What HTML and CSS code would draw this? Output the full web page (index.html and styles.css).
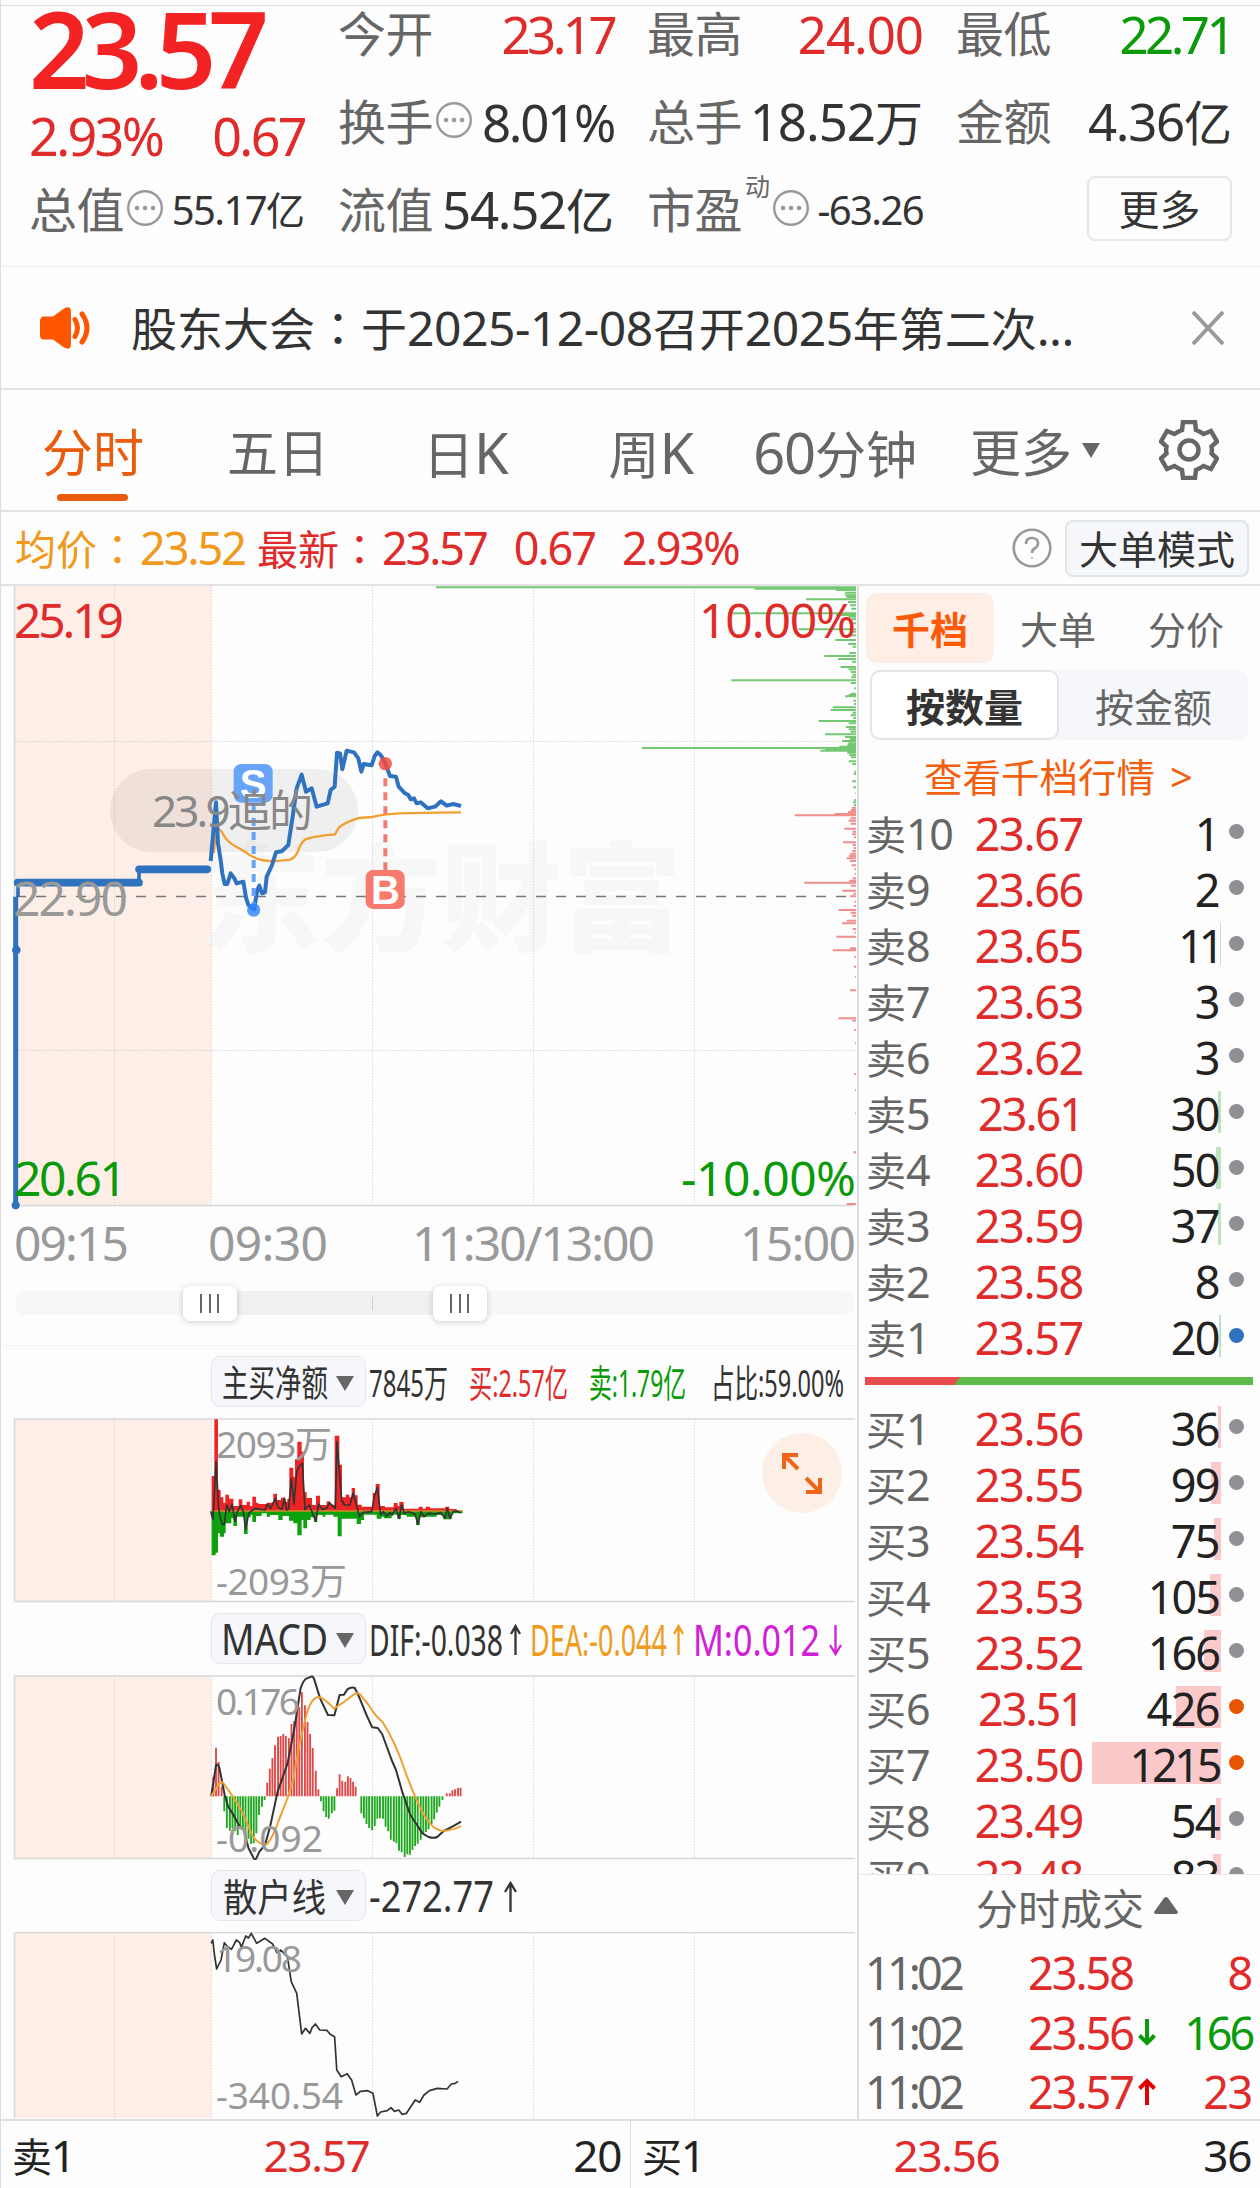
FILE: index.html
```html
<!DOCTYPE html>
<html lang="zh-CN">
<head>
<meta charset="utf-8">
<title>分时行情</title>
<link rel="stylesheet" href="styles.css">
</head>
<body>
<div class="page">

<header class="quote">
  <div class="col">
    <div class="big">23.57</div>
    <div class="change"><span>2.93%</span><span>0.67</span></div>
    <div class="cell"><span class="key">总值</span><svg class="dots" viewBox="0 0 36 36"><circle cx="18" cy="18" r="16.8"/><path d="M10 18h.1M18 18h.1M26 18h.1"/></svg><span class="val mid n1">55.17<small>亿</small></span></div>
  </div>
  <div class="col">
    <div class="cell"><span class="key">今开</span><span class="val red n1">23.17</span></div>
    <div class="cell"><span class="key">换手</span><svg class="dots" viewBox="0 0 36 36"><circle cx="18" cy="18" r="16.8"/><path d="M10 18h.1M18 18h.1M26 18h.1"/></svg><span class="val n2">8.01%</span></div>
    <div class="cell"><span class="key">流值</span><span class="val">54.52<small>亿</small></span></div>
  </div>
  <div class="col">
    <div class="cell"><span class="key">最高</span><span class="val red n0">24.00</span></div>
    <div class="cell"><span class="key">总手</span><span class="val n2">18.52<small>万</small></span></div>
    <div class="cell"><span class="key">市盈</span><sup>动</sup><svg class="dots" viewBox="0 0 36 36"><circle cx="18" cy="18" r="16.8"/><path d="M10 18h.1M18 18h.1M26 18h.1"/></svg><span class="val mid">-63.26</span></div>
  </div>
  <div class="col">
    <div class="cell"><span class="key">最低</span><span class="val green n1">22.71</span></div>
    <div class="cell"><span class="key">金额</span><span class="val">4.36<small>亿</small></span></div>
    <div class="cell"><button class="more">更多</button></div>
  </div>
</header>

<section class="notice">
  <svg class="horn" viewBox="0 0 54 46"><path d="M5 11.500H14L25 3.500Q32 0 32 7V39Q32 46 25 42.500L14 34.500H5Q1 34.500 1 30V16Q1 11.500 5 11.500Z" fill="#ff5500"/><path d="M36 14.500Q41 23 36 31.500M43 9Q53 23 43 37" fill="none" stroke="#ff5500" stroke-width="5" stroke-linecap="round"/></svg>
  <p>股东大会<span class="tc" lang="zh-TW">：</span>于<b>2025-12-08</b>召开<b>2025</b>年第二次<b>...</b></p>
  <svg class="close" viewBox="0 0 34 34"><path d="M2 1L32 33M32 1L2 33"/></svg>
</section>

<nav class="tabs">
  <a class="on">分时</a><a>五日</a><a>日<b>K</b></a><a>周<b>K</b></a><a><b>60</b>分钟</a><a>更多</a>
  <svg class="caret" viewBox="0 0 18 15"><path d="M0 0H18L9 15Z"/></svg>
  <svg class="gear" viewBox="0 0 60 60"><path d="M24 2H36L37 10Q41 11.500 44.500 14L52 11L58 21.500L52.500 26.500Q53.300 30 52.500 33.500L58 38.500L52 49L44.500 46Q41 48.500 37 50L36 58H24L23 50Q19 48.500 15.500 46L8 49L2 38.500L7.500 33.500Q6.700 30 7.500 26.500L2 21.500L8 11L15.500 14Q19 11.500 23 10Z"/><circle cx="30" cy="30" r="9.500"/></svg>
</nav>

<section class="info">
  <span class="avg">均价<span class="tc" lang="zh-TW">：</span><b>23.52</b></span>
  <span class="last">最新<span class="tc" lang="zh-TW">：</span><b>23.57</b><b class="g">0.67</b><b class="g">2.93%</b></span>
  <svg class="help" viewBox="0 0 40 40"><circle cx="20" cy="20" r="18.300"/><path d="M14 16Q14 10 20 10T26 15.500Q26 18.500 22.500 20.500Q20 22 20 25M20 29.500V30.500"/></svg>
  <button>大单模式</button>
</section>

<main>
<div class="charts">
  <svg class="intraday" viewBox="0 586 857 694">
    <rect x="14" y="586" width="197" height="619" fill="#fdeee7"/>
    <text class="mark" x="200" y="942" textLength="482" lengthAdjust="spacingAndGlyphs">东方财富</text>
    <path class="grid" d="M114.500 587V1205M211.500 587V1205M372.500 587V1205M533.500 587V1205M694.500 587V1205M14 741.500H855M14 1050.500H855"/>
    <path class="frame" d="M14.500 586V1205M14 1205.500H855"/>
    <g transform="translate(420 580) scale(.33333)">
      <path class="depth g" d="M48 22H1308M1003 26H1308M1248 30H1308M1275 38H1308M1275 46H1308M1158 58H1308M1280 51H1308M1284 66H1308M1290 76H1308M1294 86H1308M925 100H1308M1248 105H1308M1285 110H1308M1294 118H1308M1288 130H1308M1135 148H1308M1293 155H1308M1280 166H1308M1246 180H1308M1285 192H1308M1298 200H1308M1288 219H1308M1213 228H1308M1254 237H1308M1296 245H1308M1262 261H1308M1286 268H1308M1292 276H1308M1297 284H1308M1294 292H1308M934 301H1308M1292 309H1308M1303 325H1308M1292 341H1308M1286 345H1308M1275 349H1308M1300 362H1308M1302 372H1308M1238 382H1308M1232 390H1308M1298 398H1308M1292 406H1308M1300 414H1308M1196 423H1308M1286 430H1308M1278 441H1308M1286 448H1308M1292 455H1308M1215 463H1308M1275 471H1308M1290 477H1308M1266 483H1308M1285 490H1308M1282 496H1308M1258 500H1308M666 504H1308M1215 508H1308M1201 512H1308M1282 518H1308M1288 525H1308M1293 532H1308M1286 544H1308M1297 552H1308M1303 575H1308M1301 582H1308M1297 604H1308M1300 622H1308M1306 640H1308M1303 660H1308M1299 667H1308M1302 675H1308"/>
      <path class="depth r" d="M1296 683H1308M1292 690H1308M1284 696H1308M1244 702H1308M1124 706H1308M1291 715H1308M1286 722H1308M1292 731H1308M1273 746H1308M1298 755H1308M1296 763H1308M1302 772H1308M1269 787H1308M1298 795H1308M1301 804H1308M1297 813H1308M1291 821H1308M1287 828H1308M1280 835H1308M1290 843H1308M1295 856H1308M1303 868H1308M1305 882H1308M1298 895H1308M1288 902H1308M1153 908H1308M1292 917H1308M1267 932H1308M1300 941H1308M1290 949H1308M1304 965H1308M1302 978H1308M1256 990H1308M1292 998H1308M1297 1007H1308M1280 1022H1308M1266 1030H1308M1298 1047H1308M1304 1058H1308M1249 1070H1308M1290 1105H1308M1238 1111H1308M1303 1130H1308M1302 1160H1308M1305 1190H1308M1290 1231H1308M1255 1315H1308M1297 1322H1308M1303 1350H1308M1305 1390H1308M1303 1482H1308M1305 1530H1308M1306 1600H1308M1300 1717H1308M1280 1872H1308"/>
    </g>
    <rect x="110" y="769" width="248" height="83" rx="41" fill="#000" opacity=".055"/>
    <path d="M16 896.500H855" stroke="#777" stroke-width="1.500" stroke-dasharray="10 10"/>
    <g transform="translate(0 580) scale(.33333)">
      <path d="M47 1873V950" fill="none" stroke="#2f72bf" stroke-width="15"/>
      <circle cx="49" cy="1110" r="13" fill="#2f72bf"/><circle cx="47" cy="1876" r="12" fill="#2f72bf"/>
      <path d="M53 908H417M417 868H622" fill="none" stroke="#2f72bf" stroke-width="23" stroke-linecap="round"/>
      <path d="M54 950V908M417 868V908" fill="none" stroke="#2f72bf" stroke-width="11"/>
      <path d="M641 820L650 740L665 755Q680 785 705 798L735 815Q755 833 785 840T870 839Q885 833 893 815Q904 785 915 779Q935 769 1005 763L1017 742Q1045 723 1078 714L1118 711Q1150 702 1200 700T1383 697" fill="none" stroke="#f0a030" stroke-width="7"/>
      <path d="M632 843L648 667L654 790L662 840L667 880L674 912L682 912L692 880L703 895L710 910L730 905L738 953L745 975L762 988L772 930L778 917L786 940L795 937L800 890L815 858L828 817L845 814L865 795L878 710L890 625L905 584L918 635L935 625L950 680L983 670L992 630L1004 620L1011 518L1020 520L1027 568L1040 512L1062 517L1075 535L1084 575L1091 552L1115 556L1124 528L1132 517L1142 525L1156 550L1170 588L1188 590L1196 620L1215 640L1225 645L1232 658L1242 655L1250 670L1262 667L1283 685L1305 680L1323 664L1340 677L1360 672L1383 678" fill="none" stroke="#2f72bf" stroke-width="12" stroke-linejoin="round"/>
      <path d="M761 672V980" stroke="#67a4f5" stroke-width="12" stroke-dasharray="24 18"/>
      <path d="M1156 595V870" stroke="#ee7d74" stroke-width="12" stroke-dasharray="24 18"/>
      <circle cx="761" cy="990" r="20" fill="#2c82fa" opacity=".8"/><circle cx="1156" cy="551" r="20" fill="#f34b3f" opacity=".85"/>
      <rect x="701" y="552" width="117" height="116" rx="22" fill="#67a4f7"/><rect x="1097" y="870" width="117" height="117" rx="22" fill="#f87a6e"/>
      <text class="badge" x="759" y="654">S</text><text class="badge" x="1156" y="971">B</text>
    </g>
    <g class="axis">
      <text x="152" y="827" textLength="161" class="pill">23.9追的</text>
      <text x="14" y="637.500" textLength="110" fill="#e02b2b">25.19</text>
      <text x="699" y="637.500" textLength="157" fill="#e02b2b">10.00%</text>
      <text x="13" y="916" textLength="115" fill="#999">22.90</text>
      <text x="14" y="1195.500" textLength="113" fill="#0a9a0a">20.61</text>
      <text x="681" y="1195.500" textLength="175" fill="#0a9a0a">-10.00%</text>
      <text x="14" y="1260.500" textLength="115">09:15</text>
      <text x="208" y="1260.500" textLength="120">09:30</text>
      <text x="412" y="1260.500" textLength="243">11:30/13:00</text>
      <text x="740" y="1260.500" textLength="116">15:00</text>
    </g>
  </svg>
  <div class="slider"><div class="track"><i class="sel"></i><i class="tick"></i><i class="knob a"></i><i class="knob b"></i></div></div>

  <section class="panel">
    <div class="head"><button><svg viewBox="0 0 152 50"><text x="10" y="39.500" textLength="106" lengthAdjust="spacingAndGlyphs" font-size="37">主买净额</text><path d="M124 19H142L133 34Z" fill="#666"/></svg></button>
      <svg class="legend" viewBox="366 0 490 50" font-size="38"><text x="369" y="41" textLength="79" lengthAdjust="spacingAndGlyphs">7845万</text><text class="up" x="469" y="41" textLength="99" lengthAdjust="spacingAndGlyphs">买:2.57亿</text><text class="down" x="589" y="41" textLength="97" lengthAdjust="spacingAndGlyphs">卖:1.79亿</text><text x="711" y="41" textLength="133" lengthAdjust="spacingAndGlyphs">占比:59.00%</text></svg></div>
    <svg class="plot" viewBox="0 1418 857 185">
      <rect x="14" y="1419" width="197" height="183" fill="#fdeee7"/>
      <path class="grid" d="M114.500 1419V1602M211.500 1419V1602M372.500 1419V1602M533.500 1419V1602M694.500 1419V1602"/>
      <path class="frame" d="M14.500 1419V1602M14 1419H855M14 1601.500H855"/>
      <g transform="translate(190 1400) scale(.33333)">
        <path fill="#ee2424" d="M65 332V228H73V58H84V270H92V292H100V308H106V284H117V296H130V318H146V298H157V315H170V305H180V318H187V290H198V308H205V312H230V308H250V281H261V300H273V293H286V305H292V297H298V203H310V230H315V178H322V125H335V155H342V277H350V294H366V315H378V287H390V315H410V304H420V314H434V107H448V194H456V292H467V284H478V292H485V264H495V286H503V314H515V320H548V279H557V252H569V318H585V322H611V309H623V318H628V306H641V326H686V320H698V326H707V320H720V325H765V320H778V327H800V332Z"/>
        <path fill="#0da10d" d="M65 334V466H77V458H84V400H90V410H102V400H107V370H124V355H130V378H141V350H162V402H173V352H182V345H187V366H198V348H215V340H230V350H240V345H265V360H278V348H297V362H310V370H322V406H335V360H340V385H351V360H362V352H372V366H382V345H398V350H406V344H430V350H443V409H455V356H500V372H513V360H522V344H560V356H575V350H582V355H605V344H622V356H633V345H650V350H678V375H689V352H705V350H740V345H760V358H785V340H818V334Z"/>
        <path stroke="#c08018" stroke-width="4" d="M65 333H818"/>
        <path class="ink" stroke-width="5" d="M62 334L69 358L78 184L86 325L92 358L97 373H103L110 315L118 335L126 312L135 363L142 335L152 317L160 335L167 388L176 340L186 332L195 325L225 330L232 312L242 325L256 295L264 322L276 328L283 295L290 330L296 325L304 235L312 312L320 215L328 198L337 190L345 328L358 315L368 340L377 364L386 312L396 328L410 325L418 308L430 320L436 325L441 125L447 200L455 300L463 315H480L489 280L497 305L508 350L518 338L545 335L553 290L562 262L572 345L580 335L590 348L600 338L606 345L618 325L627 355L635 315L643 340L655 335L675 342L684 373L693 335L702 350L715 340L735 342L752 338L765 355L772 325L780 355L790 335L800 333L812 338"/>
      </g>
      <g class="axis small"><text x="216" y="1457.500" textLength="116">2093万</text><text x="216" y="1594.500" textLength="131">-2093万</text></g>
      <circle cx="802" cy="1473" r="40" fill="#fdeee6"/>
      <path d="M784 1469V1455H798M784 1455L798 1469M820 1478V1492H806M820 1492L806 1478" fill="none" stroke="#f06418" stroke-width="4"/>
    </svg>
  </section>

  <section class="panel">
    <div class="head"><button><svg viewBox="0 0 152 50"><text x="9" y="41" textLength="107" lengthAdjust="spacingAndGlyphs" font-size="43">MACD</text><path d="M124 19H142L133 34Z" fill="#666"/></svg></button>
      <svg class="legend" viewBox="366 0 490 50" font-size="44"><text x="369" y="42.500" textLength="134" lengthAdjust="spacingAndGlyphs">DIF:-0.038</text><path class="arr" stroke="#333" d="M515.500 42V14M511 21L515.500 13L520 21"/><text class="dea" x="530" y="42.500" textLength="137" lengthAdjust="spacingAndGlyphs">DEA:-0.044</text><path class="arr" stroke="#ee9c20" d="M678.500 42V14M674 21L678.500 13L683 21"/><text class="m" x="693" y="42.500" textLength="127" lengthAdjust="spacingAndGlyphs">M:0.012</text><path class="arr" stroke="#d020d8" d="M835.500 12V40M830 32L835.500 41L841 32"/></svg></div>
    <svg class="plot" viewBox="0 1675 857 185">
      <rect x="14" y="1676" width="197" height="183" fill="#fdeee7"/>
      <path class="grid" d="M114.500 1676V1859M211.500 1676V1859M372.500 1676V1859M533.500 1676V1859M694.500 1676V1859"/>
      <path class="frame" d="M14.500 1676V1859M14 1676H855M14 1858.500H855"/>
      <g transform="translate(190 1600) scale(.4337 .33333)">
        <path class="bar" stroke="#e04848" d="M54 589V530M60 589V443M66 589V486M73 589V560M178 589V548M184 589V506M190 589V474M196 589V436M203 589V410M209 589V408M215 589V402M221 589V408M228 589V415M234 589V372M240 589V364M246 589V340M252 589V322M258 589V276M265 589V316M271 589V366M277 589V402M283 589V444M290 589V512M296 589V568M339 589V565M345 589V523M351 589V542M358 589V545M364 589V529M370 589V534M376 589V545M382 589V560M592 589V580M599 589V580M605 589V571M611 589V568M618 589V564M624 589V563"/>
        <path class="bar" stroke="#1da81d" d="M79 589V634M85 589V684M92 589V692M98 589V685M104 589V692M110 589V705M116 589V688M122 589V690M128 589V700M135 589V716M141 589V732M147 589V730M153 589V700M159 589V645M166 589V620M172 589V600M302 589V604M308 589V634M314 589V651M320 589V656M327 589V640M333 589V632M395 589V640M401 589V655M407 589V672M413 589V684M420 589V691M426 589V678M432 589V656M438 589V655M445 589V656M451 589V680M457 589V694M463 589V719M470 589V725M476 589V730M482 589V752M488 589V757M495 589V771M501 589V763M507 589V764M513 589V750M519 589V738M525 589V731M532 589V719M538 589V701M544 589V696M550 589V688M557 589V672M563 589V658M569 589V638M575 589V620M582 589V600"/>
        <path class="ink" vector-effect="non-scaling-stroke" stroke-width="2" d="M49 588L60 495Q65 490 68 505L80 585L88 620L98 640L115 680L124 690L135 745L147 775Q151 782 154 772L160 755L173 735L185 678L202 575L225 490L240 390L255 265Q262 240 268 236L280 230Q285 228 288 245L300 295L318 345L333 346L345 285L355 284L363 268Q372 260 380 264L388 285L396 310L407 345L420 382L433 384L443 402L465 480L475 510L490 578L508 645L522 672L536 700L550 711Q562 716 570 711L585 693L605 680L625 665"/>
        <path vector-effect="non-scaling-stroke" fill="none" stroke="#f0a030" stroke-width="2" d="M49 588L68 550Q73 540 80 555L97 586L120 635L145 710Q165 740 178 732Q192 710 205 660Q225 600 238 540Q250 440 263 375Q275 295 295 291Q307 290 332 326L355 306L378 283Q385 277 392 283L410 312L428 346L445 368Q475 430 495 510Q520 600 540 645Q560 690 580 692Q605 693 625 678"/>
      </g>
      <g class="axis small"><text x="216" y="1715" textLength="84">0.176</text><text x="216" y="1852" textLength="107">-0.092</text></g>
    </svg>
  </section>

  <section class="panel">
    <div class="head"><button><svg viewBox="0 0 152 50"><text x="11" y="40" textLength="103" lengthAdjust="spacingAndGlyphs" font-size="38">散户线</text><path d="M124 19H142L133 34Z" fill="#666"/></svg></button>
      <svg class="legend" viewBox="366 0 490 50" font-size="44"><text x="369" y="42" textLength="125" lengthAdjust="spacingAndGlyphs">-272.77</text><path class="arr" stroke="#333" d="M510.500 42V14M505 22L510.500 13L516 22"/></svg></div>
    <svg class="plot" viewBox="0 1932 857 187">
      <rect x="14" y="1933" width="197" height="185" fill="#fdeee7"/>
      <path class="grid" d="M114.500 1933V2119M211.500 1933V2119M372.500 1933V2119M533.500 1933V2119M694.500 1933V2119"/>
      <path class="frame" d="M14.500 1933V2118M14 1932.500H855"/>
      <g transform="translate(0 1860) scale(.5485 .33333)"><path class="ink" vector-effect="non-scaling-stroke" stroke-width="1.700" d="M385 250L388 240L391 285L395 327L403 300L409 248L415 260L422 268L431 240L437 248L440 262L448 228L453 234L458 220L468 250L483 235L497 252L505 278L512 270L520 285L524 290L531 365L541 400L550 522L557 505L565 520L569 503L575 492L583 510L596 511L602 523L610 530L614 630L622 650L633 641L641 660L649 705L657 694L670 692L680 700L688 768L694 756L706 752L713 743L719 754L727 750L733 763L741 760L757 720L765 727L773 705L783 692L797 685L815 687L823 672L830 670L835 664"/></g>
      <g class="axis small"><text x="216" y="1971.500" textLength="86">19.08</text><text x="216" y="2108.500" textLength="127">-340.54</text></g>
    </svg>
  </section>
</div>

<aside class="book">
  <div class="modes"><a class="on">千档</a><a>大单</a><a>分价</a></div>
  <div class="seg"><a class="on">按数量</a><a>按金额</a></div>
  <a class="link">查看千档行情<b>&gt;</b></a>
  <div class="levels">
    <ul class="sell">
      <li><span>卖<b>10</b></span><em>23.67</em><q>1</q><i></i></li>
      <li><span>卖<b>9</b></span><em>23.66</em><q>2</q><i></i></li>
      <li><span>卖<b>8</b></span><em>23.65</em><q class="n2"><u style="width:1px"></u>11</q><i></i></li>
      <li><span>卖<b>7</b></span><em>23.63</em><q>3</q><i></i></li>
      <li><span>卖<b>6</b></span><em>23.62</em><q>3</q><i></i></li>
      <li><span>卖<b>5</b></span><em class="n1">23.61</em><q><u style="width:3px"></u>30</q><i></i></li>
      <li><span>卖<b>4</b></span><em>23.60</em><q><u style="width:5px"></u>50</q><i></i></li>
      <li><span>卖<b>3</b></span><em>23.59</em><q><u style="width:3px"></u>37</q><i></i></li>
      <li><span>卖<b>2</b></span><em>23.58</em><q>8</q><i></i></li>
      <li><span>卖<b>1</b></span><em>23.57</em><q><u style="width:2px"></u>20</q><i class="blue"></i></li>
    </ul>
    <svg class="ratio" viewBox="0 0 388 8"><path d="M0 0H388V8H0Z" fill="#5ebb4b"/><path d="M0 0H95L89 8H0Z" fill="#e84c4c"/></svg>
    <ul class="buy">
      <li><span>买<b>1</b></span><em>23.56</em><q><u style="width:3px"></u>36</q><i></i></li>
      <li><span>买<b>2</b></span><em>23.55</em><q><u style="width:10px"></u>99</q><i></i></li>
      <li><span>买<b>3</b></span><em>23.54</em><q><u style="width:7px"></u>75</q><i></i></li>
      <li><span>买<b>4</b></span><em>23.53</em><q class="n0"><u style="width:11px"></u>105</q><i></i></li>
      <li><span>买<b>5</b></span><em>23.52</em><q class="n0"><u style="width:17px"></u>166</q><i></i></li>
      <li><span>买<b>6</b></span><em class="n1">23.51</em><q><u style="width:45px"></u>426</q><i class="hot"></i></li>
      <li><span>买<b>7</b></span><em>23.50</em><q class="n1"><u style="width:129px"></u>1215</q><i class="hot"></i></li>
      <li><span>买<b>8</b></span><em>23.49</em><q><u style="width:5px"></u>54</q><i></i></li>
      <li><span>买<b>9</b></span><em>23.48</em><q><u style="width:8px"></u>83</q><i></i></li>
    </ul>
  </div>
  <div class="ticks">
    <h3>分时成交<svg viewBox="0 0 24 17"><path d="M12 0Q13 0 14 1L24 15Q24 17 22 17H2Q0 17 0 15L10 1Q11 0 12 0Z"/></svg></h3>
    <div class="tk"><span>11:02</span><em>23.58</em><b class="red">8</b></div>
    <div class="tk"><span>11:02</span><em>23.56</em><svg viewBox="0 0 18 28"><path d="M9 1V25M1.500 17.500L9 25L16.500 17.500" stroke="#0a9a0a"/></svg><b class="green n1">166</b></div>
    <div class="tk"><span>11:02</span><em>23.57</em><svg viewBox="0 0 18 28"><path d="M9 27V3M1.500 10.500L9 3L16.500 10.500" stroke="#e00000"/></svg><b class="red">23</b></div>
  </div>
</aside>
</main>

<footer>
  <div><span>卖<b>1</b></span><em>23.57</em><b>20</b></div>
  <div><span>买<b>1</b></span><em>23.56</em><b>36</b></div>
</footer>
</div>
</body>
</html>
```

FILE: styles.css
```css
* { box-sizing: border-box; }
body {
  margin: 0;
  background: #fdfdfd;
  color: #333;
  font-family: "Noto Sans", "Noto Sans CJK SC", sans-serif;
}
b, em, i, u, q { font-weight: 400; font-style: normal; text-decoration: none; }
q::before, q::after { content: none; }
svg { display: block; flex: none; }
button { font: inherit; color: inherit; padding: 0; margin: 0; }
.tc { font-family: "Noto Sans CJK TC", sans-serif; }
.page {
  width: 1260px;
  height: 2188px;
  overflow: hidden;
  border-left: 1px solid #dedede;
  display: flex;
  flex-direction: column;
}
.red { color: #e02b2b; }
.green { color: #0a9a0a; }

/* quote header */
.quote {
  margin-top: 5px;
  border-top: 1px solid #dedede;
  border-bottom: 1px solid #eeefef;
  height: 262px;
  padding-left: 28px;
  display: flex;
  gap: 33px;
  flex: none;
}
.col { width: 276px; flex: none; display: flex; flex-direction: column; gap: 32px; }
.col:first-child { gap: 0; }
.big {
  height: 88px;
  line-height: 84px;
  font-size: 106px;
  font-weight: 600;
  letter-spacing: -.075em;
  color: #f32323;
}
.change {
  height: 88px;
  padding-top: 14px;
  display: flex;
  justify-content: space-between;
  font-size: 52px;
  line-height: 56px;
  letter-spacing: -.05em;
  color: #e02b2b;
}
.cell { height: 56px; display: flex; align-items: center; line-height: 56px; white-space: nowrap; }
.key { font-size: 48px; color: #666; letter-spacing: -.01em; }
.val { margin-left: auto; font-size: 51px; letter-spacing: -.025em; color: #333; }
.val small { font-size: 48px; letter-spacing: 0; }
.val.red { color: #e02b2b; }
.val.green { color: #0a9a0a; }
.val.n1 { letter-spacing: -.07em; }
.val.n0 { letter-spacing: -.02em; }
.val.n2 { letter-spacing: -.045em; }
.val.n2:has(small) { letter-spacing: -.02em; }
.val.mid { font-size: 40px; letter-spacing: -.04em; }
.val.mid small { font-size: 39px; }
.cell sup { align-self: flex-start; font-size: 25px; line-height: 25px; margin: -8px 0 0 3px; color: #666; }
.dots { width: 36px; height: 36px; margin-left: 3px; margin-top: -4px; }
.dots circle { fill: none; stroke: #999; stroke-width: 2.400; }
.dots path { stroke: #999; stroke-width: 4.500; stroke-linecap: round; }
.more {
  margin-left: auto;
  width: 145px;
  height: 65px;
  margin-top: -3px;
  border: 2px solid #e6e7ea;
  border-radius: 8px;
  background: none;
  font-size: 41px;
  line-height: 56px;
}

/* announcement */
.notice { height: 123px; border-bottom: 2px solid #e2e2e4; display: flex; align-items: center; padding: 0 35px 0 38px; flex: none; }
.horn { width: 54px; height: 46px; }
.notice p { margin: -2px 0 0 38px; font-size: 46px; line-height: 60px; white-space: nowrap; }
.notice p b { font-size: 48px; letter-spacing: -.01em; }
.close { width: 34px; height: 34px; margin-left: auto; }
.close path { stroke: #999; stroke-width: 3.800; }

/* period tabs */
.tabs { height: 122px; border-bottom: 2px solid #e2e2e4; display: flex; align-items: center; padding-left: 41px; flex: none; color: #666; }
.tabs a { font-size: 51px; line-height: 125px; height: 120px; white-space: nowrap; position: relative; margin-right: 83px; }
.tabs a b { font-size: 56px; letter-spacing: -.02em; }
.tabs a:nth-child(2) { margin-right: 94px; }
.tabs a:nth-child(3) { margin-right: 101px; }
.tabs a:nth-child(4) { margin-right: 60px; }
.tabs a:nth-child(5) { margin-right: 53px; }
.tabs a:nth-child(6) { margin-right: 10px; }
.tabs .on { color: #e85c0c; }
.tabs .on::after { content: ""; position: absolute; left: 15px; bottom: 9px; width: 71px; height: 7px; border-radius: 4px; background: #e85c0c; }
.caret { width: 18px; height: 15px; fill: #666; }
.gear { width: 60px; height: 60px; margin-left: auto; margin-right: 41px; }
.gear path, .gear circle { fill: none; stroke: #666; stroke-width: 4.500; }

/* average and last price */
.info { height: 74px; border-bottom: 2px solid #e2e2e4; display: flex; align-items: center; padding: 0 11px 0 14px; font-size: 41px; line-height: 72px; flex: none; white-space: nowrap; }
.info b { font-size: 45px; letter-spacing: -.045em; margin-left: 2px; }
.info .g { margin-left: 27px; }
.avg { color: #f0991c; margin-right: 12px; }
.last { color: #e02b2b; }
.help { width: 40px; height: 40px; margin-left: auto; margin-right: 13px; }
.help circle, .help path { fill: none; stroke: #999; stroke-width: 2.600; }
.info button { width: 184px; height: 57px; border: 2px solid #e1e4e8; border-radius: 8px; background: #f6f7fa; font-size: 39px; line-height: 53px; }

/* charts */
main { display: flex; height: 1533px; flex: none; }
.charts { width: 859px; margin-left: -1px; border-right: 2px solid #dcdcdc; overflow: hidden; flex: none; display: flex; flex-direction: column; }
.intraday { width: 857px; height: 694px; }
.grid { fill: none; stroke: #c9c9c9; stroke-opacity: .7; stroke-width: 1; stroke-dasharray: 1.500 1.500; }
.frame { fill: none; stroke: #d8d8d8; stroke-width: 1.500; }
.mark { font: 900 118px "Noto Sans CJK SC", sans-serif; fill: #f7f7f7; }
.depth { fill: none; stroke-width: 6; stroke-opacity: .75; }
.depth.g { stroke: #45b545; }
.depth.r { stroke: #ec6868; }
.badge { font: 700 120px "Liberation Sans", sans-serif; fill: #fff; text-anchor: middle; }
.axis { font-size: 48px; fill: #999; }
.axis .pill { font-size: 44px; fill: #888; }
.axis.small { font-size: 37px; }
.ink { fill: none; stroke: #333; stroke-linejoin: round; }
.bar { stroke-width: 4.300; }
.slider { height: 66px; padding: 11px 0 0 15px; border-bottom: 1px solid #f3f3f3; flex: none; }
.track { position: relative; width: 840px; height: 24px; border-radius: 10px; background: #f6f7f9; }
.track i { position: absolute; }
.sel { left: 195px; width: 250px; height: 24px; background: #f0f0f2; }
.tick { left: 357px; top: 6px; width: 1px; height: 13px; background: #ccc; }
.knob { top: -5px; width: 54px; height: 35px; border-radius: 7px; background: linear-gradient(#666, #666) 17px 8px / 2px 19px no-repeat, linear-gradient(#666, #666) 26px 8px / 2px 19px no-repeat, linear-gradient(#666, #666) 34px 8px / 2px 19px no-repeat, #fff; box-shadow: 0 1px 6px #0003; }
.knob.a { left: 168px; }
.knob.b { left: 418px; }
.panel { height: 257px; flex: none; }
.head { height: 72px; padding: 10px 0 0 211px; display: flex; }
.panel .head button { width: 155px; height: 51px; border: 1px solid #e4e6ea; border-radius: 9px; background: #f6f7fa; }
.head text { fill: #333; }
.head .up { fill: #e02b2b; }
.head .down { fill: #0a9a0a; }
.head .dea { fill: #ee9c20; }
.head .m { fill: #d020d8; }
.head button svg { width: 152px; height: 50px; }
.legend { width: 490px; height: 50px; }
.arr { fill: none; stroke-width: 2.300; }
.plot { width: 857px; height: 185px; }
.panel:last-child .plot { height: 187px; }

/* order book */
.book { flex: 1; height: 1533px; overflow: hidden; }
.modes { margin: 7px 10px 0 7px; height: 70px; display: flex; font-size: 38px; line-height: 73px; color: #666; }
.modes a { width: 129px; text-align: center; border-radius: 10px; }
.modes .on { color: #fb5a08; background: #feeee6; font-weight: 700; }
.seg { margin: 7px 12px 0 11px; height: 70px; display: flex; border-radius: 10px; background: #f6f7fa; font-size: 39px; line-height: 73px; color: #666; }
.seg a { width: 190px; text-align: center; }
.seg .on { border: 2px solid #e4e5e8; border-radius: 10px; background: #fff; font-weight: 700; color: #333; line-height: 69px; }
.link { display: block; height: 66px; line-height: 73px; padding-left: 65px; font-size: 38.500px; color: #f2600f; }
.link b { margin-left: 15px; font-size: 40px; }
.levels { height: 1069px; overflow: hidden; border-bottom: 1px solid #e8e8e8; }
.levels ul { margin: 0; padding: 0; list-style: none; }
.levels li { height: 56px; display: flex; align-items: center; line-height: 56px; padding-left: 7px; }
.levels span { width: 99px; font-size: 40px; color: #666; white-space: nowrap; }
.levels span b { font-size: 43px; letter-spacing: -.03em; }
.levels em { width: 118px; text-align: right; font-size: 45px; letter-spacing: -.03em; color: #e02b2b; }
.levels em.n1 { letter-spacing: -.045em; }
.levels q { width: 136px; position: relative; text-align: right; font-size: 45px; letter-spacing: -.035em; color: #222; }
.levels q.n0 { letter-spacing: -.045em; }
.levels q.n1 { letter-spacing: -.075em; }
.levels q.n2 { letter-spacing: -.12em; }
.levels u { position: absolute; right: -2px; top: 5px; height: 42px; z-index: -1; background: #fbc9c9; }
.sell u { background: #bfe3bf; }
.levels i { width: 15px; height: 15px; margin: -5px 0 0 10px; border-radius: 50%; background: #8f8f94; }
.levels .blue { background: #2f72bf; }
.levels .hot { background: #e85500; }
.ratio { width: 388px; height: 8px; margin: 11px 0 16px 6px; }
.ticks { color: #666; }
.ticks h3 { margin: 0; height: 68px; padding-left: 117px; display: flex; align-items: center; font-weight: 400; font-size: 42px; line-height: 68px; }
.ticks h3 svg { width: 24px; height: 17px; margin-left: 10px; margin-top: -8px; fill: #666; }
.tk { height: 59.500px; display: flex; align-items: center; padding: 0 8px 0 6px; font-size: 45px; line-height: 59px; letter-spacing: -.03em; }
.tk span { width: 163px; letter-spacing: -.085em; }
.tk em { color: #e02b2b; width: 107px; letter-spacing: -.045em; }
.tk b { margin-left: auto; }
.tk b.n1 { letter-spacing: -.07em; }
.tk svg { width: 18px; height: 28px; margin-left: 3px; }
.tk path { fill: none; stroke-width: 4; }

/* best bid and ask */
footer { height: 69px; border-top: 2px solid #dedede; display: flex; flex: none; }
footer div { width: 629px; display: flex; padding: 0 9px 0 11px; justify-content: space-between; font-size: 44px; line-height: 69px; letter-spacing: -.03em; color: #222; }
footer div + div { width: 630px; border-left: 1px solid #dedede; }
footer span { font-size: 40px; width: 95px; }
footer span b { font-size: 44px; }
footer em { color: #e02b2b; }
footer div > b { width: 95px; text-align: right; }
```
